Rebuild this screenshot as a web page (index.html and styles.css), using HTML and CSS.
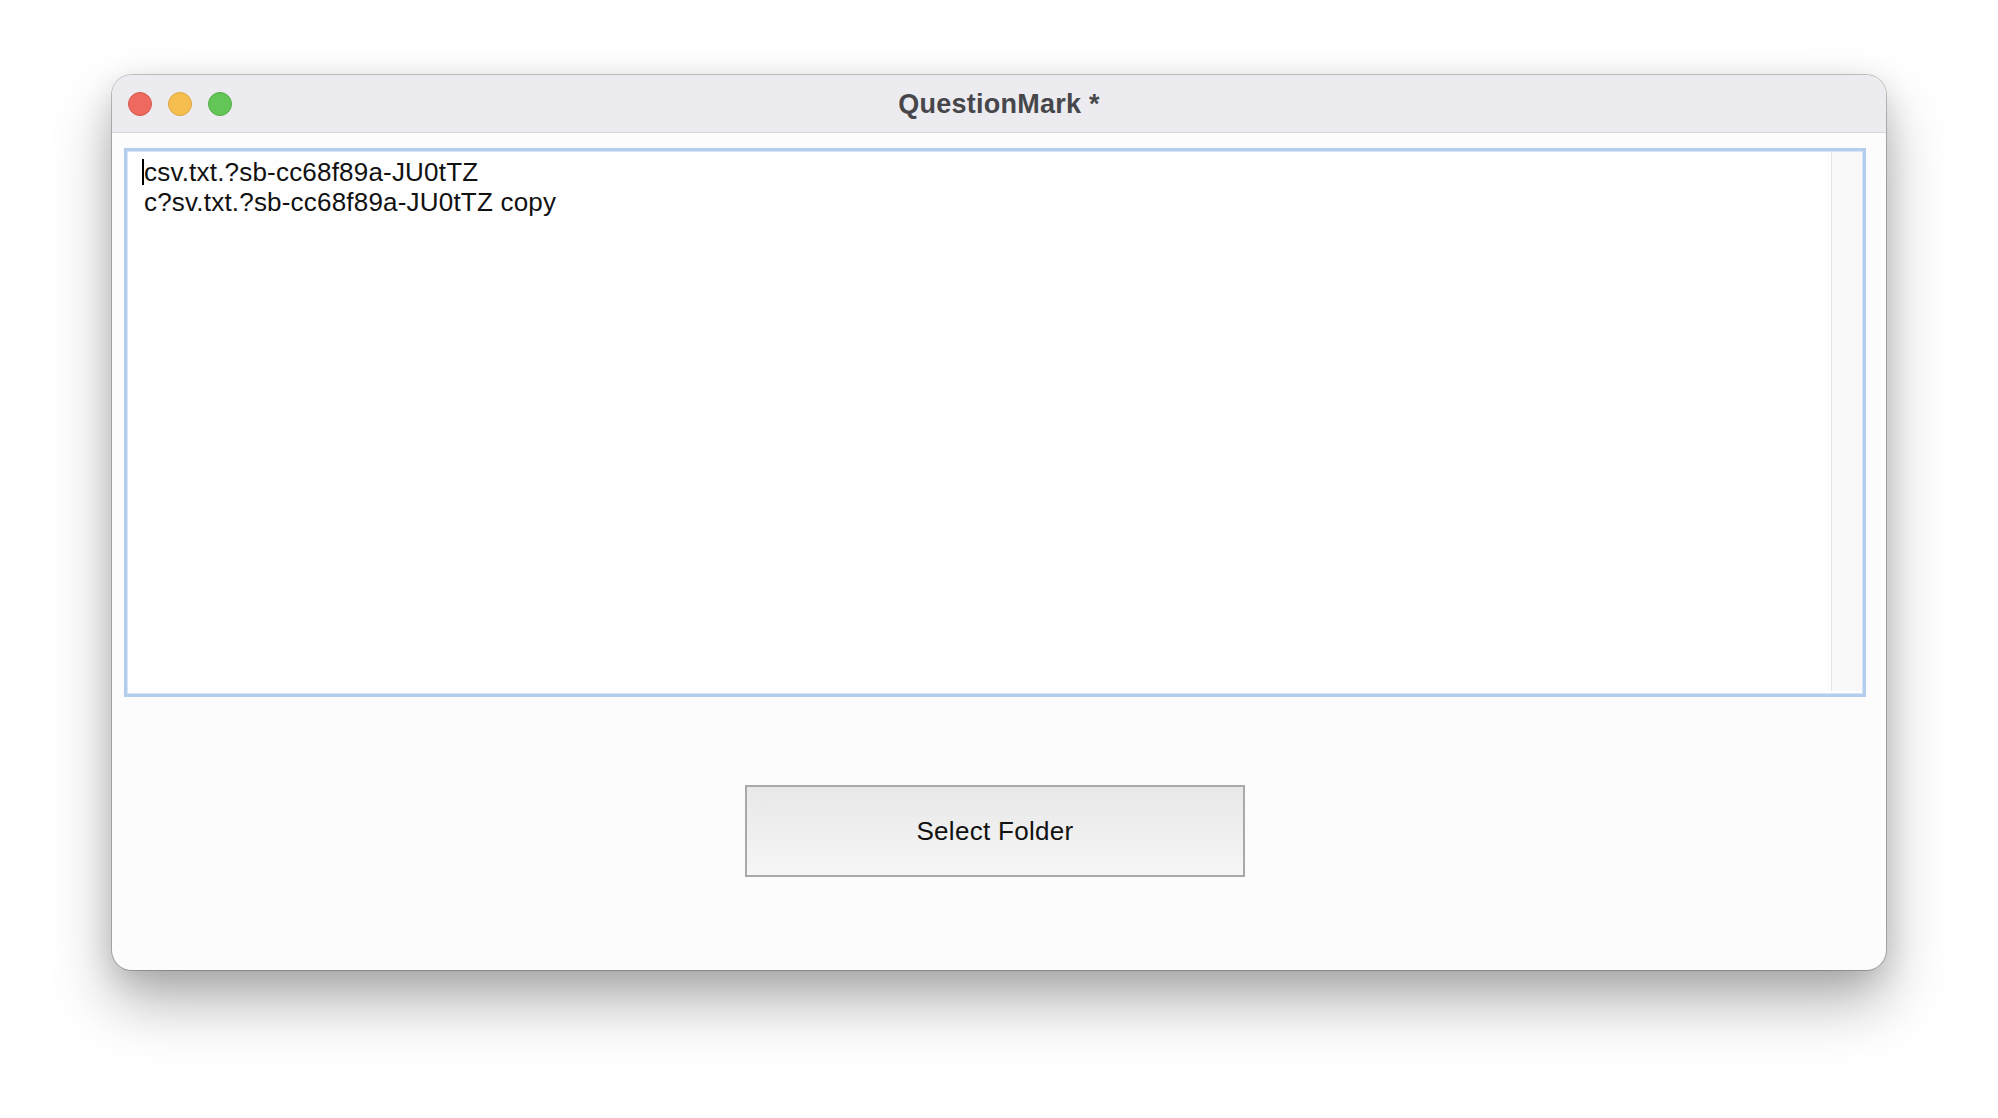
FILE: index.html
```html
<!DOCTYPE html>
<html>
<head>
<meta charset="utf-8">
<link rel="stylesheet" href="styles.css">
</head>
<body>
<div class="desktop">
  <div class="window">
    <div class="titlebar">
      <div class="lights">
        <span class="light red"></span>
        <span class="light yellow"></span>
        <span class="light green"></span>
      </div>
      <div class="title">QuestionMark *</div>
    </div>
    <div class="content">
      <div class="textarea">
        <div class="text">
          <div class="line"><span class="caret"></span>csv.txt.?sb-cc68f89a-JU0tTZ</div>
          <div class="line">c?sv.txt.?sb-cc68f89a-JU0tTZ copy</div>
        </div>
        <div class="scrolltrack"></div>
      </div>
      <div class="buttonrow">
        <button class="btn">Select Folder</button>
      </div>
    </div>
  </div>
</div>
</body>
</html>
```

FILE: styles.css
```css
html, body {
  margin: 0;
  padding: 0;
  background: #ffffff;
}
body {
  width: 1998px;
  height: 1118px;
  overflow: hidden;
  font-family: "Liberation Sans", Arial, sans-serif;
}
.desktop {
  padding: 75px 0 0 112px;
}
.window {
  width: 1774px;
  height: 895px;
  border-radius: 20px;
  background: #fcfcfc;
  box-shadow: 0 0 0 1px rgba(0,0,0,0.22), 0 32px 60px rgba(0,0,0,0.30), 0 8px 30px rgba(0,0,0,0.12);
  overflow: hidden;
  display: flex;
  flex-direction: column;
}
.titlebar {
  height: 57px;
  background: #ececf0;
  border-bottom: 1px solid #d6d6d8;
  display: flex;
  align-items: center;
  position: relative;
  flex: none;
}
.lights {
  display: flex;
  gap: 16px;
  padding-left: 16px;
  padding-top: 1px;
}
.light {
  width: 22px;
  height: 22px;
  border-radius: 50%;
  display: block;
}
.red { background: #ee6a5f; border: 1px solid #d9574c; }
.yellow { background: #f5be4f; border: 1px solid #dea73c; }
.green { background: #62c555; border: 1px solid #50ad43; }
.title {
  position: absolute;
  left: 0;
  right: 0;
  top: 0;
  bottom: 0;
  display: flex;
  align-items: center;
  justify-content: center;
  font-weight: bold;
  font-size: 27px;
  letter-spacing: 0.25px;
  color: #47474b;
  padding-top: 1px;
}
.content {
  flex: 1;
  display: flex;
  flex-direction: column;
  padding: 15px 20px 0 12px;
}
.textarea {
  height: 543px;
  border: 3px solid #b2cdee;
  background: #fefefe;
  display: flex;
  box-shadow: inset 0 0 0 1px #d6e4f5;
}
.text {
  flex: 1;
  padding: 6px 0 0 17px;
  font-size: 26px;
  line-height: 30px;
  letter-spacing: 0.2px;
  color: #111;
}
.line {
  position: relative;
  white-space: pre;
}
.caret {
  position: absolute;
  left: -2px;
  top: 2px;
  width: 2px;
  height: 26px;
  background: #000;
}
.scrolltrack {
  width: 30px;
  background: #f9f9f9;
  border-left: 1px solid #e6e6e6;
  margin: 1px 1px 3px 0;
}
.buttonrow {
  display: flex;
  justify-content: center;
  padding: 88px 0 0 0;
}
.btn {
  width: 500px;
  height: 92px;
  border: 2px solid #a9a9a9;
  background: linear-gradient(#e8e8e8, #f6f6f6);
  font-family: "Liberation Sans", Arial, sans-serif;
  font-size: 26px;
  letter-spacing: 0.3px;
  color: #111;
  padding: 0;
  border-radius: 0;
}
```
